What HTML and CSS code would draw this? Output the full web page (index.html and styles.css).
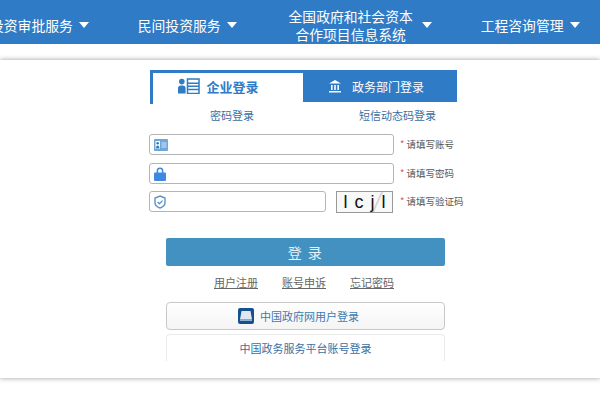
FILE: index.html
```html
<!DOCTYPE html>
<html lang="zh-CN">
  <head>
    <meta charset="UTF-8" />
    <title>登录</title>
    <link rel="stylesheet" href="styles.css">
  </head>
  <body>
    <div class="page">
      <nav class="nav">
        <a class="nav-item">投资审批服务<i class="caret"></i></a>
        <a class="nav-item">民间投资服务<i class="caret"></i></a>
        <a class="nav-item nav-double">
          <span>全国政府和社会资本<br />合作项目信息系统</span><i class="caret"></i>
        </a>
        <a class="nav-item">工程咨询管理<i class="caret"></i></a>
      </nav>

      <div class="card">
        <div class="login">
          <div class="tabs">
            <div class="tab tab-active">
              <svg width="22" height="16" viewBox="0 0 22 16">
                <circle cx="3.8" cy="3.6" r="2.8" fill="#2f7bc6" />
                <path d="M0 15.5v-5q0-3 3-3h1.6q3 0 3 3v5z" fill="#2f7bc6" />
                <path d="M9.5 1h11.5v14.5H9.5zM9.5 5.2H21M9.5 8.2H21M9.5 11.4H21" fill="none" stroke="#2f7bc6" stroke-width="1.5" />
              </svg>
              企业登录
            </div>
            <div class="tab tab-other">
              <svg width="14" height="14" viewBox="0 0 14 14">
                <path d="M7 1 13 4.6H1zM1 12h12v1.4H1zM3 6h1.6v5H3zM6.2 6h1.6v5H6.2zM9.4 6H11v5H9.4z" fill="#fff" />
              </svg>
              政务部门登录
            </div>
          </div>
          <div class="subtabs">
            <a>密码登录</a>
            <a>短信动态码登录</a>
          </div>

          <div class="row">
            <div class="field">
              <svg width="14" height="12" viewBox="0 0 14 12">
                <rect width="14" height="12" rx="1" fill="#6fa6dc" />
                <rect x="1.5" y="2" width="4.5" height="8" fill="#fff" />
                <circle cx="3.7" cy="4.3" r="1.3" fill="#2f7bc6" />
                <path d="M2 9.5q0-3 1.7-3t1.7 3z" fill="#2f7bc6" />
                <path d="M7.5 4h5M7.5 6h5M7.5 8h5" stroke="#d6e6f6" />
              </svg>
            </div>
            <label class="hint"><em>*</em> 请填写账号</label>
          </div>
          <div class="row">
            <div class="field">
              <svg width="12" height="14" viewBox="0 0 12 14">
                <path d="M3.4 6V3.8a2.6 2.6 0 0 1 5.2 0V6" fill="none" stroke="#3d8ae0" stroke-width="1.5" />
                <rect y="5.5" width="12" height="8.5" rx="1" fill="#3d8ae0" />
              </svg>
            </div>
            <label class="hint"><em>*</em> 请填写密码</label>
          </div>
          <div class="row">
            <div class="field field-short">
              <svg width="12" height="14" viewBox="0 0 12 14">
                <path d="M6 1 11 3v5q0 3-5 5-5-2-5-5V3z" fill="none" stroke="#5b93c9" stroke-width="1.4" />
                <path d="M3.6 7 5.4 8.8 8.6 5.6" fill="none" stroke="#5b93c9" stroke-width="1.3" />
              </svg>
            </div>
            <div class="captcha">l c j l</div>
            <label class="hint"><em>*</em> 请填写验证码</label>
          </div>

          <button class="submit" type="button">登 录</button>
          <div class="links">
            <a>用户注册</a>
            <a>账号申诉</a>
            <a>忘记密码</a>
          </div>
          <button class="alt-btn alt-icon" type="button">
            <svg width="16" height="16" viewBox="0 0 16 16">
              <rect width="16" height="16" rx="2" fill="#15508f" />
              <path d="M3.5 3h9l1.5 8.5H2z" fill="#dfe8f2" />
              <rect x="2" y="11.5" width="12" height="1.5" fill="#8fb1d3" />
            </svg>
            中国政府网用户登录
          </button>
          <button class="alt-btn alt-open" type="button">中国政务服务平台账号登录</button>
        </div>
      </div>
    </div>
  </body>
</html>
```

FILE: styles.css
```css
* {
  margin: 0;
  padding: 0;
  box-sizing: border-box;
}
body {
  font-family: "Noto Sans CJK SC", "Liberation Sans", sans-serif;
  background: #fff;
}
a {
  cursor: pointer;
}
.page {
  width: 600px;
  height: 400px;
  overflow: hidden;
}
.nav {
  height: 44px;
  padding-top: 6px;
  margin-left: -10px;
  background: #2f7bc6;
  color: #fff;
  font-size: 13.8px;
  display: flex;
  align-items: center;
  gap: 49px;
  white-space: nowrap;
}
.nav-item {
  display: flex;
  align-items: center;
  gap: 6px;
}
.nav-double {
  text-align: center;
  line-height: 18px;
  gap: 9px;
  margin-left: 3px;
}
.caret {
  width: 0;
  height: 0;
  border-left: 5px solid transparent;
  border-right: 5px solid transparent;
  border-top: 6px solid #fff;
}
.card {
  height: 318px;
  margin-top: 16px;
  background: #fff;
  box-shadow: 0 0 5px rgba(0, 0, 0, 0.4);
  padding-top: 10px;
}
.login {
  width: 308px;
  margin-left: 149px;
}
.tabs {
  display: flex;
  align-items: flex-start;
  margin-left: 1px;
}
.tab {
  flex: none;
  display: flex;
  align-items: center;
  justify-content: center;
}
.tab-active {
  width: 153px;
  height: 34px;
  padding: 0 19px 5px 0;
  gap: 6px;
  color: #2f7bc6;
  font-size: 13px;
  font-weight: 700;
  border-top: 3px solid #2f7bc6;
  border-left: 3px solid #2f7bc6;
}
.tab-other {
  width: 154px;
  height: 32px;
  padding-right: 8px;
  gap: 10px;
  background: #2f7bc6;
  color: #fff;
  font-size: 12px;
}
.subtabs {
  display: flex;
  margin: 3px 0 11px;
  font-size: 11px;
  line-height: 16px;
  color: #3b6f9f;
}
.subtabs a:first-child {
  margin-left: 61px;
}
.subtabs a:last-child {
  margin-left: 105px;
}
.row {
  display: flex;
  align-items: center;
  height: 21px;
  margin-bottom: 8px;
  white-space: nowrap;
}
.row + .row {
  margin-bottom: 7px;
}
.field {
  flex: none;
  width: 245px;
  height: 21px;
  padding-left: 4px;
  display: flex;
  align-items: center;
  background: #fff;
  border: 1px solid #b5b5b5;
  border-radius: 3px;
}
.field-short {
  width: 177px;
}
.hint {
  margin-left: 6px;
  padding-bottom: 2px;
  font-size: 9.5px;
  color: #555;
}
.hint em {
  color: #d9534f;
  font-style: normal;
}
.captcha {
  flex: none;
  width: 57px;
  height: 22px;
  margin-left: 10px;
  border: 1px solid #999;
  background: linear-gradient(115deg, transparent 68%, #ccc 70%, transparent 73%), #f8f8f8;
  color: #111;
  font-family: "Liberation Sans", sans-serif;
  font-size: 18px;
  line-height: 20px;
  word-spacing: 2px;
  text-align: center;
}
.captcha + .hint {
  margin-left: 7px;
}
.submit {
  display: block;
  width: 279px;
  height: 28px;
  margin: 26px 0 0 17px;
  border: none;
  border-radius: 2px;
  background: #4391c1;
  color: #e8f2f8;
  font: inherit;
  font-size: 14px;
  letter-spacing: 1.5px;
}
.links {
  display: flex;
  gap: 24px;
  justify-content: center;
  margin: 8px 0 12px;
  padding-left: 2px;
  font-size: 11px;
  line-height: 16px;
  color: #666;
}
.links a {
  text-decoration: underline;
}
.alt-btn {
  width: 279px;
  height: 28px;
  margin-left: 17px;
  display: flex;
  align-items: center;
  justify-content: center;
  gap: 6px;
  border: 1px solid #c8c8c8;
  border-radius: 4px;
  background: linear-gradient(#fff, #f4f4f4);
  color: #3b7ab0;
  font: inherit;
  font-size: 11px;
}
.alt-icon {
  padding-right: 14px;
}
.alt-open {
  height: 27px;
  margin-top: 4px;
  border-color: #eaeaea;
  border-bottom: none;
  border-radius: 4px 4px 0 0;
  background: #fff;
  color: #3b6f9f;
}
```
